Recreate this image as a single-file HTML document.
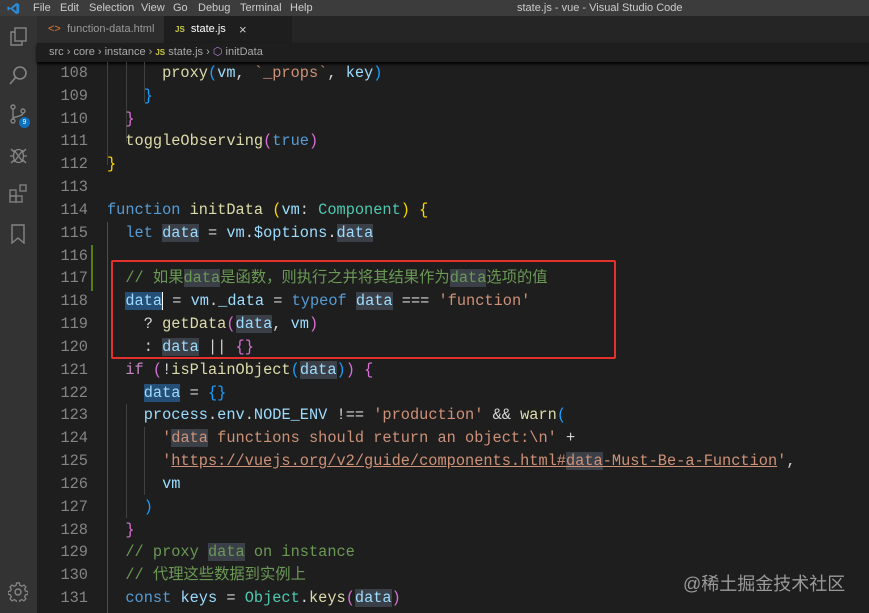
<!DOCTYPE html>
<html><head><meta charset="utf-8"><style>
*{margin:0;padding:0;box-sizing:border-box}
html,body{width:869px;height:613px;overflow:hidden}
body{background:#1e1e1e;font-family:"Liberation Sans","Noto Sans CJK SC",sans-serif;position:relative}
#title{position:absolute;left:0;top:0;width:869px;height:16px;background:#3c3c3c;color:#ccc;font-size:11px;line-height:16px}
#title span{position:absolute;top:0}
#act{position:absolute;left:0;top:16px;width:37px;height:597px;background:#333}
#tabs{position:absolute;left:37px;top:16px;width:832px;height:27px;background:#252526}
.tab{position:absolute;top:0;height:27px;line-height:27px;font-size:11px;color:#999}
#crumb{position:absolute;left:37px;top:43px;width:832px;height:19px;background:#1e1e1e;color:#a9a9a9;font-size:11px;line-height:19px;padding-left:12px;box-shadow:0 2px 3px #000}
#code{position:absolute;left:37px;top:62px;font-family:"Liberation Mono","Noto Sans CJK SC",monospace;font-size:15.3px;color:#d4d4d4}
.l{height:22.83px;line-height:22.83px;white-space:pre;position:relative}
.n{display:inline-block;width:51px;text-align:right;color:#858585;margin-right:19px}
.k{color:#569cd6}.v{color:#9cdcfe}.f{color:#dcdcaa}.s{color:#ce9178}.c{color:#6a9955}.y{color:#ffd700}.p{color:#da70d6}.b{color:#179fff}.t{color:#4ec9b0}.kc{color:#c586c0}
.h{background:#3b4048}
.sel{background:#264f78}
.g{position:absolute;width:1px;background:#404040}
</style></head><body>
<div id="title">
<svg style="position:absolute;left:7px;top:2px" width="13" height="13" viewBox="0 0 16 16"><path d="M11.5 1 L15 2.7 V13.3 L11.5 15 L4 8.5 L1.5 10.5 L0.5 10 V6 L1.5 5.5 L4 7.5 Z M11.5 4.5 L7 8 L11.5 11.5 Z" fill="#2a8ad4"/></svg>
<span style="left:33px">File</span><span style="left:60px">Edit</span><span style="left:89px">Selection</span><span style="left:141px">View</span><span style="left:173px">Go</span><span style="left:198px">Debug</span><span style="left:240px">Terminal</span><span style="left:290px">Help</span>
<span style="left:517px">state.js - vue - Visual Studio Code</span>
</div>
<div id="act">
<svg style="position:absolute;left:9px;top:10px" width="19" height="21" viewBox="0 0 19 21" fill="none" stroke="#858585" stroke-width="1.4"><rect x="6" y="2" width="11" height="13"/><path d="M6 6H2v13h11v-4"/></svg>
<svg style="position:absolute;left:9px;top:50px" width="19" height="20" viewBox="0 0 19 20" fill="none" stroke="#858585" stroke-width="1.6"><circle cx="11" cy="7" r="6"/><path d="M7 11L1 18"/></svg>
<svg style="position:absolute;left:9px;top:88px" width="20" height="22" viewBox="0 0 20 22" fill="none" stroke="#858585" stroke-width="1.4"><circle cx="4" cy="3" r="2"/><circle cx="4" cy="17" r="2"/><circle cx="14" cy="7" r="2"/><path d="M4 5v10M14 9c0 4-10 3-10 6"/></svg>
<div style="position:absolute;left:19px;top:101px;width:11px;height:11px;border-radius:50%;background:#0e70c0;color:#fff;font-size:7px;line-height:11px;text-align:center">9</div>
<svg style="position:absolute;left:9px;top:129px" width="19" height="20" viewBox="0 0 19 20" fill="none" stroke="#858585" stroke-width="1.3"><ellipse cx="9.5" cy="11" rx="5" ry="6.5"/><path d="M5 5l9 12M14 5L5 17M1 11h3M15 11h3M2 4l3 3M17 4l-3 3M2 18l3-3M17 18l-3-3"/></svg>
<svg style="position:absolute;left:9px;top:168px" width="19" height="20" viewBox="0 0 19 20" fill="none" stroke="#858585" stroke-width="1.3"><rect x="1" y="6" width="6" height="6"/><rect x="1" y="12" width="6" height="6"/><rect x="7" y="12" width="6" height="6"/><rect x="11" y="1" width="6" height="6"/></svg>
<svg style="position:absolute;left:11px;top:208px" width="14" height="20" viewBox="0 0 14 20" fill="none" stroke="#858585" stroke-width="1.4"><path d="M1 1h12v18l-6-5-6 5z"/></svg>
<svg style="position:absolute;left:8px;top:566px" width="20" height="20" viewBox="0 0 20 20" fill="none" stroke="#858585" stroke-width="1.4"><circle cx="10" cy="10" r="3"/><path d="M8.5 1.5h3l.5 2.5 2 1 2.3-1.3 2 2-1.3 2.3 1 2 2.5.5v3l-2.5.5-1 2 1.3 2.3-2 2-2.3-1.3-2 1-.5 2.5h-3l-.5-2.5-2-1-2.3 1.3-2-2 1.3-2.3-1-2-2.5-.5v-3l2.5-.5 1-2-1.3-2.3 2-2 2.3 1.3 2-1z" transform="scale(.95) translate(.5 -.5)"/></svg>
</div>
<div id="tabs">
<div class="tab" style="left:0;width:127px;background:#2d2d2d;padding-left:11px"><span style="color:#e37933">&lt;&gt;</span>&nbsp; function-data.html</div>
<div class="tab" style="left:127px;width:128px;background:#1e1e1e;color:#fff;padding-left:11px"><span style="color:#cbcb41;font-size:8px;font-weight:bold">JS</span>&nbsp; state.js<span style="position:absolute;left:75px;color:#ccc;font-size:13px">×</span></div>
</div>
<div id="crumb">src › core › instance › <span style="color:#cbcb41;font-size:8px;font-weight:bold">JS</span> state.js › <span style="color:#b180d7">⬡</span> initData</div>
<div class="g" style="left:107px;top:62px;height:103px"></div>
<div class="g" style="left:126px;top:62px;height:80px"></div>
<div class="g" style="left:144px;top:62px;height:40px"></div>
<div class="g" style="left:107px;top:222px;height:391px;background:#5a5030"></div>
<div class="g" style="left:126px;top:404px;height:114px"></div>
<div class="g" style="left:144px;top:427px;height:68px"></div>
<div style="position:absolute;left:91px;top:245px;width:2px;height:46px;background:#587c0c"></div>
<div id="code">
<div class="l"><span class="n">108</span>      <span class="f">proxy</span><span class="b">(</span><span class="v">vm</span>, <span class="s">`_props`</span>, <span class="v">key</span><span class="b">)</span></div>
<div class="l"><span class="n">109</span>    <span class="b">}</span></div>
<div class="l"><span class="n">110</span>  <span class="p">}</span></div>
<div class="l"><span class="n">111</span>  <span class="f">toggleObserving</span><span class="p">(</span><span class="k">true</span><span class="p">)</span></div>
<div class="l"><span class="n">112</span><span class="y">}</span></div>
<div class="l"><span class="n">113</span></div>
<div class="l"><span class="n">114</span><span class="k">function</span> <span class="f">initData</span> <span class="y">(</span><span class="v">vm</span>: <span class="t">Component</span><span class="y">)</span> <span class="y">{</span></div>
<div class="l"><span class="n">115</span>  <span class="k">let</span> <span class="v h">data</span> = <span class="v">vm</span>.<span class="v">$options</span>.<span class="v h">data</span></div>
<div class="l"><span class="n">116</span></div>
<div class="l"><span class="n">117</span>  <span class="c">// 如果<span class="h">data</span>是函数，则执行之并将其结果作为<span class="h">data</span>选项的值</span></div>
<div class="l"><span class="n">118</span>  <span class="v sel">data</span><span style="border-left:1px solid #fff"></span> = <span class="v">vm</span>.<span class="v">_data</span> = <span class="k">typeof</span> <span class="v h">data</span> === <span class="s">'function'</span></div>
<div class="l"><span class="n">119</span>    ? <span class="f">getData</span><span class="p">(</span><span class="v h">data</span>, <span class="v">vm</span><span class="p">)</span></div>
<div class="l"><span class="n">120</span>    : <span class="v h">data</span> || <span class="p">{}</span></div>
<div class="l"><span class="n">121</span>  <span class="kc">if</span> <span class="p">(</span>!<span class="f">isPlainObject</span><span class="b">(</span><span class="v h">data</span><span class="b">)</span><span class="p">)</span> <span class="p">{</span></div>
<div class="l"><span class="n">122</span>    <span class="v sel">data</span> = <span class="b">{}</span></div>
<div class="l"><span class="n">123</span>    <span class="v">process</span>.<span class="v">env</span>.<span class="v">NODE_ENV</span> !== <span class="s">'production'</span> &amp;&amp; <span class="f">warn</span><span class="b">(</span></div>
<div class="l"><span class="n">124</span>      <span class="s">'<span class="h">data</span> functions should return an object:\n'</span> +</div>
<div class="l"><span class="n">125</span>      <span class="s">'<span style="text-decoration:underline">https://vuejs.org/v2/guide/components.html#<span class="h">data</span>-Must-Be-a-Function</span>'</span>,</div>
<div class="l"><span class="n">126</span>      <span class="v">vm</span></div>
<div class="l"><span class="n">127</span>    <span class="b">)</span></div>
<div class="l"><span class="n">128</span>  <span class="p">}</span></div>
<div class="l"><span class="n">129</span>  <span class="c">// proxy <span class="h">data</span> on instance</span></div>
<div class="l"><span class="n">130</span>  <span class="c">// 代理这些数据到实例上</span></div>
<div class="l"><span class="n">131</span>  <span class="k">const</span> <span class="v">keys</span> = <span class="t">Object</span>.<span class="f">keys</span><span class="p">(</span><span class="v h">data</span><span class="p">)</span></div>
</div>
<div style="position:absolute;left:111px;top:260px;width:505px;height:99px;border:2.5px solid #e3322d;border-radius:2px"></div>
<div style="position:absolute;left:683px;top:570px;color:#9a9a9a;font-size:18px;font-family:'Liberation Sans','Noto Sans CJK SC',sans-serif">@稀土掘金技术社区</div>
</body></html>
